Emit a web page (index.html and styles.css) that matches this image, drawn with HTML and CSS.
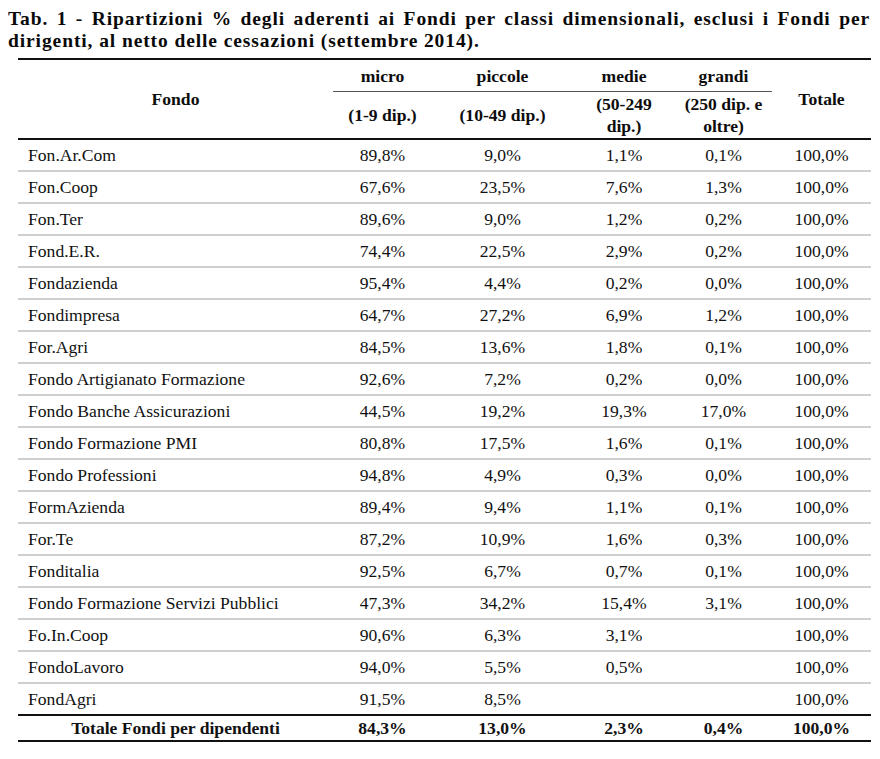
FILE: index.html
```html
<!DOCTYPE html>
<html lang="it">
<head>
<meta charset="utf-8">
<title>Tab. 1</title>
<link rel="stylesheet" href="styles.css">
</head>
<body>
<p class="title">Tab. 1 - Ripartizioni % degli aderenti ai Fondi per classi dimensionali, esclusi i Fondi per dirigenti, al netto delle cessazioni (settembre 2014).</p>
<table class="tab">
  <colgroup>
    <col class="c-name"><col class="c-micro"><col class="c-picc"><col class="c-medie"><col class="c-grandi"><col class="c-tot">
  </colgroup>
  <thead>
    <tr class="h1">
      <th rowspan="2" class="hname">Fondo</th>
      <th class="hsub">micro</th>
      <th class="hsub">piccole</th>
      <th class="hsub">medie</th>
      <th class="hsub">grandi</th>
      <th rowspan="2" class="htot">Totale</th>
    </tr>
    <tr class="h2">
      <th>(1-9 dip.)</th>
      <th>(10-49 dip.)</th>
      <th>(50-249<br>dip.)</th>
      <th>(250 dip. e<br>oltre)</th>
    </tr>
  </thead>
  <tbody>
    <tr><td>Fon.Ar.Com</td><td>89,8%</td><td>9,0%</td><td>1,1%</td><td>0,1%</td><td>100,0%</td></tr>
    <tr><td>Fon.Coop</td><td>67,6%</td><td>23,5%</td><td>7,6%</td><td>1,3%</td><td>100,0%</td></tr>
    <tr><td>Fon.Ter</td><td>89,6%</td><td>9,0%</td><td>1,2%</td><td>0,2%</td><td>100,0%</td></tr>
    <tr><td>Fond.E.R.</td><td>74,4%</td><td>22,5%</td><td>2,9%</td><td>0,2%</td><td>100,0%</td></tr>
    <tr><td>Fondazienda</td><td>95,4%</td><td>4,4%</td><td>0,2%</td><td>0,0%</td><td>100,0%</td></tr>
    <tr><td>Fondimpresa</td><td>64,7%</td><td>27,2%</td><td>6,9%</td><td>1,2%</td><td>100,0%</td></tr>
    <tr><td>For.Agri</td><td>84,5%</td><td>13,6%</td><td>1,8%</td><td>0,1%</td><td>100,0%</td></tr>
    <tr><td>Fondo Artigianato Formazione</td><td>92,6%</td><td>7,2%</td><td>0,2%</td><td>0,0%</td><td>100,0%</td></tr>
    <tr><td>Fondo Banche Assicurazioni</td><td>44,5%</td><td>19,2%</td><td>19,3%</td><td>17,0%</td><td>100,0%</td></tr>
    <tr><td>Fondo Formazione PMI</td><td>80,8%</td><td>17,5%</td><td>1,6%</td><td>0,1%</td><td>100,0%</td></tr>
    <tr><td>Fondo Professioni</td><td>94,8%</td><td>4,9%</td><td>0,3%</td><td>0,0%</td><td>100,0%</td></tr>
    <tr><td>FormAzienda</td><td>89,4%</td><td>9,4%</td><td>1,1%</td><td>0,1%</td><td>100,0%</td></tr>
    <tr><td>For.Te</td><td>87,2%</td><td>10,9%</td><td>1,6%</td><td>0,3%</td><td>100,0%</td></tr>
    <tr><td>Fonditalia</td><td>92,5%</td><td>6,7%</td><td>0,7%</td><td>0,1%</td><td>100,0%</td></tr>
    <tr><td>Fondo Formazione Servizi Pubblici</td><td>47,3%</td><td>34,2%</td><td>15,4%</td><td>3,1%</td><td>100,0%</td></tr>
    <tr><td>Fo.In.Coop</td><td>90,6%</td><td>6,3%</td><td>3,1%</td><td></td><td>100,0%</td></tr>
    <tr><td>FondoLavoro</td><td>94,0%</td><td>5,5%</td><td>0,5%</td><td></td><td>100,0%</td></tr>
    <tr class="last"><td>FondAgri</td><td>91,5%</td><td>8,5%</td><td></td><td></td><td>100,0%</td></tr>
  </tbody>
  <tfoot>
    <tr class="total"><td>Totale Fondi per dipendenti</td><td>84,3%</td><td>13,0%</td><td>2,3%</td><td>0,4%</td><td>100,0%</td></tr>
  </tfoot>
</table>
</body>
</html>
```
FILE: styles.css
```css
html, body {
  background: #ffffff;
}
body {
  margin: 8px;
  font-family: "Liberation Serif", "Times New Roman", serif;
  color: #111111;
}
.title {
  margin: 0;
  width: 862px;
  font-size: 19.5px;
  line-height: 22px;
  font-weight: bold;
  letter-spacing: 0.9px;
  text-align: justify;
  color: #0a0a0a;
}
.tab {
  margin: 6px 0 0 10px;
  width: 853px;
  border-collapse: collapse;
  table-layout: fixed;
  font-size: 17.6px;
}
.c-name { width: 315px; }
.c-micro { width: 99px; }
.c-picc { width: 141px; }
.c-medie { width: 102px; }
.c-grandi { width: 97px; }
.c-tot { width: 99px; }

.tab th {
  font-weight: bold;
  text-align: center;
  padding: 0;
  line-height: 22px;
  color: #0d0d0d;
}
.tab thead tr.h1 th {
  border-top: 2px solid #111;
  height: 31px;
}
.tab thead tr.h1 th.hsub {
  border-bottom: 1px solid #555;
}
.tab thead tr.h2 th {
  height: 46px;
  border-bottom: 2px solid #111;
}
.tab th.hname, .tab th.htot {
  border-bottom: 2px solid #111;
}
.tab td {
  padding: 0;
  height: 30px;
  text-align: center;
  line-height: 20px;
  border-bottom: 2px solid #cfcfcf;
}
.tab td:first-child {
  text-align: left;
  padding-left: 10px;
}
.tab tr.last td {
  border-bottom: 2px solid #111;
}
.tab tr.total td {
  height: 24px;
  font-weight: bold;
  border-bottom: 2px solid #111;
}
.tab tr.total td:first-child {
  text-align: center;
  padding-left: 0;
}
```
